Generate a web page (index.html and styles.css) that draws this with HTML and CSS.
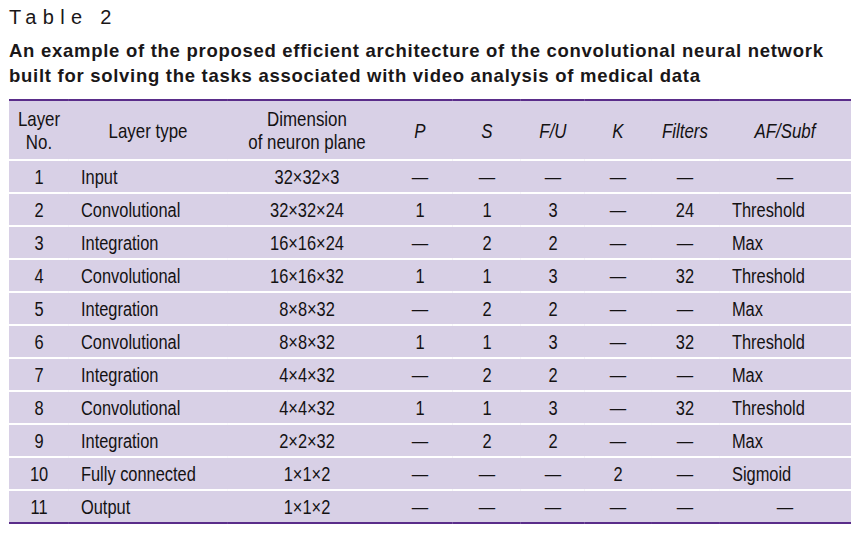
FILE: index.html
```html
<!DOCTYPE html>
<html>
<head>
<meta charset="utf-8">
<link rel="stylesheet" href="styles.css">
</head>
<body>
<div class="page">
  <div class="label">Table 2</div>
  <h1 class="caption">An example of the proposed efficient architecture of the convolutional neural network built for solving the tasks associated with video analysis of medical data</h1>
  <div class="tablewrap">
  <table class="arch">
    <colgroup>
      <col class="c1"><col class="c2"><col class="c3"><col class="c4"><col class="c5"><col class="c6"><col class="c7"><col class="c8"><col class="c9">
    </colgroup>
    <thead>
      <tr>
        <th>Layer<br>No.</th>
        <th>Layer type</th>
        <th>Dimension<br>of neuron plane</th>
        <th class="it">P</th>
        <th class="it">S</th>
        <th class="it">F/U</th>
        <th class="it">K</th>
        <th class="it">Filters</th>
        <th class="it">AF/Subf</th>
      </tr>
    </thead>
    <tbody>
      <tr><td>1</td><td class="l">Input</td><td>32×32×3</td><td>—</td><td>—</td><td>—</td><td>—</td><td>—</td><td>—</td></tr>
      <tr><td>2</td><td class="l">Convolutional</td><td>32×32×24</td><td>1</td><td>1</td><td>3</td><td>—</td><td>24</td><td class="l last">Threshold</td></tr>
      <tr><td>3</td><td class="l">Integration</td><td>16×16×24</td><td>—</td><td>2</td><td>2</td><td>—</td><td>—</td><td class="l last">Max</td></tr>
      <tr><td>4</td><td class="l">Convolutional</td><td>16×16×32</td><td>1</td><td>1</td><td>3</td><td>—</td><td>32</td><td class="l last">Threshold</td></tr>
      <tr><td>5</td><td class="l">Integration</td><td>8×8×32</td><td>—</td><td>2</td><td>2</td><td>—</td><td>—</td><td class="l last">Max</td></tr>
      <tr><td>6</td><td class="l">Convolutional</td><td>8×8×32</td><td>1</td><td>1</td><td>3</td><td>—</td><td>32</td><td class="l last">Threshold</td></tr>
      <tr><td>7</td><td class="l">Integration</td><td>4×4×32</td><td>—</td><td>2</td><td>2</td><td>—</td><td>—</td><td class="l last">Max</td></tr>
      <tr><td>8</td><td class="l">Convolutional</td><td>4×4×32</td><td>1</td><td>1</td><td>3</td><td>—</td><td>32</td><td class="l last">Threshold</td></tr>
      <tr><td>9</td><td class="l">Integration</td><td>2×2×32</td><td>—</td><td>2</td><td>2</td><td>—</td><td>—</td><td class="l last">Max</td></tr>
      <tr><td>10</td><td class="l">Fully connected</td><td>1×1×2</td><td>—</td><td>—</td><td>—</td><td>2</td><td>—</td><td class="l last">Sigmoid</td></tr>
      <tr><td>11</td><td class="l">Output</td><td>1×1×2</td><td>—</td><td>—</td><td>—</td><td>—</td><td>—</td><td>—</td></tr>
    </tbody>
  </table>
  </div>
</div>
</body>
</html>
```

FILE: styles.css
```css
html, body {
  margin: 0;
  padding: 0;
  background: #ffffff;
  overflow: hidden;
}
.page {
  padding: 6px 8px 0 9px;
  color: #1a1718;
}
.label {
  font-family: "Liberation Sans", Arial, sans-serif;
  font-size: 20px;
  line-height: 22px;
  letter-spacing: 6.3px;
  margin: 0;
}
.caption {
  font-family: "Liberation Sans", Arial, sans-serif;
  font-weight: bold;
  font-size: 18.5px;
  line-height: 25px;
  letter-spacing: 0.72px;
  margin: 10px 0 11px 0;
}
.tablewrap {
  width: 842px;
  overflow: hidden;
}
.arch {
  width: 1026.8px;
  transform: scaleX(0.82);
  transform-origin: 0 0;
  table-layout: fixed;
  border-collapse: collapse;
  background: #d8d0e6;
  border-top: 2px solid #5a2d8a;
  border-bottom: 2px solid #5a2d8a;
  font-family: "Liberation Sans", Arial, sans-serif;
  font-size: 20px;
  color: #141213;
}
.c1 { width: 73.2px; }
.c2 { width: 192.7px; }
.c3 { width: 195.1px; }
.c4 { width: 80.5px; }
.c5 { width: 82.9px; }
.c6 { width: 78px; }
.c7 { width: 80.5px; }
.c8 { width: 82.9px; }
.c9 { width: 161px; }
.arch th {
  font-weight: normal;
  font-size: 20.6px;
  height: 58px;
  line-height: 23px;
  padding: 0;
  text-align: center;
  vertical-align: middle;
}
.arch th.it {
  font-style: italic;
}
.arch td {
  height: 31px;
  padding: 0;
  text-align: center;
  vertical-align: middle;
  line-height: 22px;
  border-top: 2px solid #ffffff;
}
.arch td.l {
  text-align: left;
  padding-left: 14.6px;
}
.arch td.last {
  padding-left: 15.9px;
}
```
